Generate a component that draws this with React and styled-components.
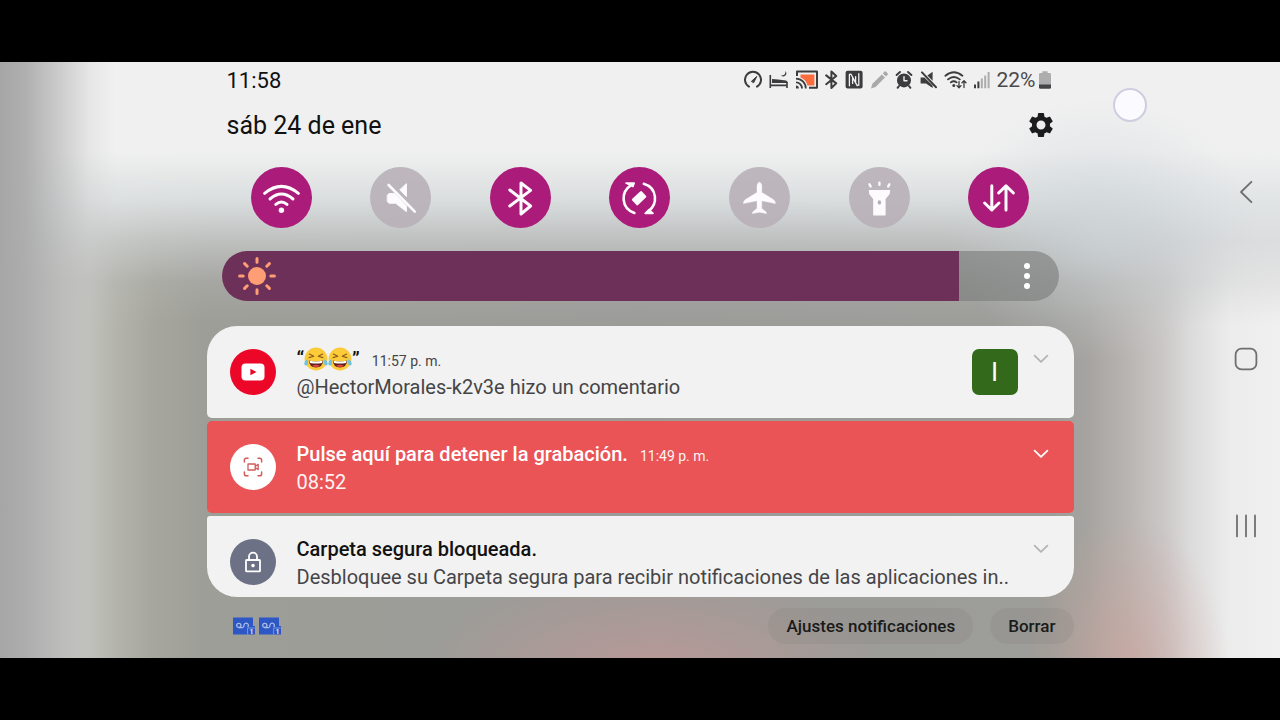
import React, { useState } from 'react'
import styled, { createGlobalStyle } from 'styled-components'
import { MdSettings } from 'react-icons/md'

const GlobalStyle = createGlobalStyle`
* { box-sizing: border-box; }
body {
  margin: 0;
  background: #000;
  font-family: Roboto, "Noto Sans", sans-serif;
}
button {
  font: inherit;
  color: inherit;
  border: 0;
  padding: 0;
  background: none;
  cursor: pointer;
}
svg { display: block; }
h2, p { margin: 0; }
`

const Letterbox = styled.div`
min-height: 100vh;
padding: 62px 0;
display: flex;
background: #000;
`

const Screen = styled.main`
flex: 1;
display: grid;
grid-template-columns: 1fr minmax(0, 867px) 1fr;
background:
  linear-gradient(to right, #a6a6a7 0%, rgba(172, 172, 173, 0.95) 2%, rgba(186, 186, 186, 0.6) 5%, rgba(200, 200, 200, 0.25) 7%, rgba(220, 220, 220, 0) 9%),
  radial-gradient(ellipse 8% 26% at 88% 102%, rgba(206, 160, 152, 0.6), rgba(206, 160, 152, 0)),
  radial-gradient(ellipse 18% 18% at 51% 103%, rgba(196, 152, 150, 0.75), rgba(196, 152, 150, 0)),
  radial-gradient(ellipse 12% 22% at 86% 28%, rgba(206, 214, 218, 0.7), rgba(206, 214, 218, 0)),
  linear-gradient(to bottom, #f1f0f1 0%, #f0f0f0 15%, rgba(224, 228, 229, 0.92) 23%, rgba(208, 211, 212, 0.65) 30%, rgba(188, 190, 190, 0.25) 37%, rgba(180, 180, 180, 0) 44%),
  linear-gradient(to right, #c2c3bd 0%, #c2c3bd 6%, #b4b4ac 9%, #a6a69d 12%, #9e9e98 16%, #9b9b98 50%, #9d9d99 82%, #a6a4a0 85%, #b8b4b1 88%, #cbc8c7 91%, #dcdbdb 93%, #ececec 96%, #f1f0f1 100%);
`

const Panel = styled.section`
grid-column: 2;
display: flex;
flex-direction: column;
`

const StatusBar = styled.div`
display: flex;
justify-content: space-between;
align-items: center;
height: 36px;
padding: 0 23px 0 20px;
font-size: 22px;
color: #111;
`

const StatusIcons = styled.div`
display: flex;
align-items: center;
gap: 7px;
color: #3c3c3e;
`

const Battery = styled.div`
display: flex;
align-items: center;
gap: 3px;
font-size: 21px;
color: #4a4a4c;
`

const DateRow = styled.div`
display: flex;
justify-content: space-between;
align-items: center;
height: 54px;
padding: 0 18px 0 20px;
font-size: 25px;
color: #111;
`

const GearButton = styled.button`
font-size: 30px;
color: #1c1c1e;
`

const Toggles = styled.div`
display: grid;
grid-template-columns: repeat(7, 1fr);
justify-items: center;
padding: 15px 15px 0;
`

const Toggle = styled.button`
width: 61px;
height: 61px;
border-radius: 50%;
color: #fdfbfd;
background: ${({ $on }) => ($on ? '#ab1b79' : 'rgba(184, 176, 183, 0.9)')};
`

const Brightness = styled.div`
display: grid;
grid-template-columns: 16px 38px 1fr 48px 8px;
align-items: center;
height: 50px;
margin: 23px 15px 25px;
`

const Range = styled.input`
grid-area: 1 / 1 / 2 / 6;
appearance: none;
width: 100%;
height: 50px;
margin: 0;
border-radius: 25px;
&::-webkit-slider-thumb {
  appearance: none;
  width: 1px;
  height: 50px;
}
`

const SunSlot = styled.span`
grid-area: 1 / 2;
pointer-events: none;
`

const DotsButton = styled.button`
grid-area: 1 / 4;
height: 50px;
display: flex;
justify-content: center;
align-items: center;
`

const List = styled.div`
display: flex;
flex-direction: column;
gap: 3px;
`

const Card = styled.article`
display: flex;
align-items: flex-start;
padding: 19px 15px 17px 23px;
border-radius: 5px;
color: ${({ $alert }) => ($alert ? '#fdf3f3' : '#454547')};
background: ${({ $alert }) => ($alert ? '#ea5456' : '#f2f2f2')};
&:first-child { border-radius: 30px 30px 5px 5px; }
&:last-child {
  padding-bottom: 6px;
  border-radius: 3px 3px 30px 30px;
}
`

const Round = styled.div`
flex: none;
display: grid;
place-items: center;
width: 46px;
height: 46px;
margin: 4px 21px 0 0;
border-radius: 50%;
background: ${({ $bg }) => $bg};
`

const Content = styled.div`
flex: 1;
min-width: 0;
white-space: nowrap;
font-size: 20px;
line-height: 28px;
`

const TitleLine = styled.div`
display: flex;
align-items: baseline;
gap: 12px;
height: 28px;
`

const Title = styled.h2`
display: flex;
font-size: 20px;
line-height: 28px;
font-weight: 500;
color: ${({ $alert }) => ($alert ? '#fff' : '#111')};
`

const When = styled.time`
font-size: 14px;
`

const Avatar = styled.div`
display: grid;
place-items: center;
width: 46px;
height: 46px;
margin: 4px 5px 0 0;
border-radius: 7px;
font-size: 26px;
color: #fff;
background: #32691a;
`

const Expand = styled.button`
display: grid;
place-items: center;
flex: none;
width: 36px;
height: 28px;
color: ${({ $alert }) => ($alert ? '#fff' : '#b4b4b6')};
`

const Footer = styled.footer`
display: flex;
align-items: center;
gap: 17px;
padding: 11px 0 0 26px;
`

const Pending = styled.div`
display: flex;
gap: 4px;
margin-right: auto;
`

const Chip = styled.button`
height: 36px;
padding: 0 18px;
border-radius: 18px;
font-size: 17px;
font-weight: 500;
color: #1a1a1a;
background: rgba(130, 125, 120, 0.2);
`

const Side = styled.nav`
position: relative;
display: flex;
flex-direction: column;
justify-content: center;
align-items: flex-end;
gap: 143px;
padding: 0 22px 3px 0;
color: #6f6f71;
`

const NavButton = styled.button`
width: 24px;
height: 24px;
`

// finger position shown over the screen
const Touch = styled.span`
position: absolute;
top: 26px;
left: 39px;
width: 34px;
height: 34px;
border-radius: 50%;
border: 2px solid #cfcde0;
background: #fbfaff;
`

const Icon = ({ w, h = w, children, ...rest }) => (
  <svg width={w} height={h} viewBox={`0 0 ${w} ${h}`} fill="none" stroke="currentColor" strokeLinecap="round" strokeLinejoin="round" aria-hidden="true" {...rest}>
    {children}
  </svg>
)

const StatusGlyphs = () => (
  <>
    <Icon w={18} h={20} strokeWidth="2">
      <path d="M5 16.6A8 8 0 1 1 13 16.6" />
      <path d="M7.6 11.2L12.8 6.4L9.8 12.4Z" fill="currentColor" strokeWidth="1" />
    </Icon>
    <Icon w={19} h={20} strokeLinecap="butt">
      <path d="M1.3 5V18M18 12V18M1 15.4H18.6" strokeWidth="1.6" />
      <path d="M3 13V9L9 9.4L17 10.6Q18.6 11 18.6 13Z" fill="currentColor" stroke="none" />
      <path d="M16.4 1Q17 5.6 12 5.6Q14 7.4 16.4 5.6Q18.4 3.4 16.4 1Z" fill="currentColor" stroke="none" />
    </Icon>
    <Icon w={23} h={20} strokeLinecap="butt">
      <path d="M5.5 4.4H19.4V15.4H12.4Q10.6 9.4 5.5 7.6Z" fill="#fb6d3c" stroke="none" />
      <path d="M2 6V1.6H22V17.8H14" strokeWidth="2" />
      <path d="M1 8.6A9.8 9.8 0 0 1 10.8 18.4M1 12.4A6 6 0 0 1 7 18.4" strokeWidth="1.8" />
      <path d="M1 15.6A2.8 2.8 0 0 1 3.8 18.4H1Z" fill="currentColor" stroke="none" />
    </Icon>
    <Icon w={13} h={20} strokeWidth="2">
      <path d="M1.2 5.4L11.2 13.4L6.4 18V1.6L11.2 6L1.2 14.2" />
    </Icon>
    <Icon w={18} h={20}>
      <rect x="0.6" y="0.8" width="17" height="17.6" rx="2" fill="currentColor" stroke="none" />
      <path d="M4.4 15.8V4.4L6 4.2L10.6 12.6V6.6M13.8 3.6V15.2L12.2 15.6L7.6 7.4V13.4" stroke="#f0f0f0" strokeWidth="1.3" />
    </Icon>
    <Icon w={18} h={20} color="#a9a9aa">
      <path d="M1 18.4L2.4 13.8L11.8 4.4L15 7.6L5.6 17Z M12.8 3.4L14.6 1.6Q15.4 1 16.2 1.8L17.6 3.2Q18.2 4 17.6 4.8L16 6.6Z" fill="currentColor" stroke="none" />
    </Icon>
    <Icon w={18} h={20} strokeWidth="2">
      <circle cx="9" cy="10.4" r="7" fill="currentColor" stroke="none" />
      <path d="M1.6 5L5 2M16.4 5L13 2M4 16L2.6 17.8M14 16L15.4 17.8" />
      <path d="M9 6.6V10.8H12" stroke="#f0f0f0" strokeWidth="1.4" />
    </Icon>
    <Icon w={17} h={20}>
      <path d="M0.6 7.4H4.4L12.6 15.6V18L6 13.4H0.6Z M12.6 1.8V10.8L7.4 5.6Z" fill="currentColor" stroke="none" />
      <path d="M2 2.4L16 17.2" strokeWidth="2" />
    </Icon>
    <Icon w={23} h={20} strokeWidth="1.8">
      <path d="M1.4 5.8Q9.8 -1.2 18.4 5.8M4 9.4Q9.8 4.6 15.8 9.4M6.8 12.4Q9.8 10 12.6 12.4" />
      <circle cx="9.8" cy="15.4" r="1.5" fill="currentColor" stroke="none" />
      <path d="M15 11.4V17.4M13 15.6L15 17.8L17 15.6M20 17.6V10.8M18 12.8L20 10.6L22 12.8" strokeWidth="1.3" />
    </Icon>
    <Icon w={16} h={20} strokeWidth="2" strokeLinecap="butt">
      <path d="M1 14.4V18.2M4.4 11.4V18.2" />
      <path d="M7.8 8.4V18.2M11.2 5.4V18.2M14.6 2V18.2" stroke="#acacad" />
    </Icon>
  </>
)

const BatteryIcon = () => (
  <Icon w={12} h={20} stroke="none">
    <path d="M3.4 1.2H8.6V3H10.6Q12 3 12 4.4V15H0V4.4Q0 3 1.4 3H3.4Z" fill="#adadae" />
    <path d="M0 14.6H12V17.4Q12 18.8 10.6 18.8H1.4Q0 18.8 0 17.4Z" fill="#454547" />
  </Icon>
)

const toggles = [
  {
    label: 'Wi-Fi',
    on: true,
    icon: (
      <>
        <path d="M13.6 26.4Q30.4 12.4 47.4 26.4M19 32Q30.4 22 42 32M24.8 37.4Q30.4 32.6 36 37.4" strokeWidth="3" />
        <circle cx="30.4" cy="43.2" r="2.7" fill="currentColor" stroke="none" />
      </>
    )
  },
  {
    label: 'Silencio',
    on: false,
    icon: (
      <>
        <path d="M17.5 28L19 26.6H24.5L36.4 38.8V44.6L25.6 36.2H18.8L17.5 34.6Z M36.4 17V29.6L30 23Z" fill="currentColor" strokeWidth="1" />
        <path d="M18.6 18L44.8 44.6" strokeWidth="2.6" />
      </>
    )
  },
  {
    label: 'Bluetooth',
    on: true,
    icon: <path d="M19.8 23L40.6 39L31 47V16L40.6 23.4L19.8 39" strokeWidth="3" />
  },
  {
    label: 'Rotar automáticamente',
    on: true,
    icon: (
      <>
        <path d="M21.8 18.4C11.6 25 11.8 41 25.4 46M34.8 16.8C48.4 21 49.2 37 39.4 44.2" strokeWidth="2.6" />
        <path d="M17 16H25.2L24 19.6ZM36.2 46.4H44L40 42.6Z" fill="currentColor" strokeWidth="1.6" />
        <path d="M24.2 32.6L32 25.4L36 29.6L28.2 37Z" fill="currentColor" strokeWidth="2.6" />
      </>
    )
  },
  {
    label: 'Modo avión',
    on: false,
    icon: <path d="M30.4 15.2Q32.6 15.6 32.8 19V25.4L44.4 32.6Q46.6 34.2 46.4 36.6L32.8 33.8V41.6L36.6 44.4Q37.6 45.4 37.4 46.6L30.4 45.2L23.4 46.6Q23.2 45.4 24.2 44.4L28 41.6V33.8L14.4 36.6Q14.2 34.2 16.4 32.6L28 25.4V19Q28.2 15.6 30.4 15.2Z" fill="currentColor" strokeWidth="0.4" />
  },
  {
    label: 'Linterna',
    on: false,
    icon: (
      <>
        <path d="M20.4 23.6H40.6L40 26.8L36 31.8V47.8H24.8V31.8L20.8 26.8Z" fill="currentColor" strokeWidth="1.2" />
        <ellipse cx="30.4" cy="35.4" rx="1.7" ry="2.2" fill="#b7afb6" stroke="none" />
        <path d="M20.4 17.2L21.6 19.4M30.4 15.6V17.8M40.4 17.2L39.2 19.4" strokeWidth="2.4" />
      </>
    )
  },
  {
    label: 'Datos móviles',
    on: true,
    icon: <path d="M23.8 18.8V43M16.6 36L23.8 43L31 36M38 43V19M30.6 26L38 18.8L45.4 26" strokeWidth="3" />
  }
]

const Sun = () => (
  <Icon w={38} color="#ff9e74">
    <circle cx="19" cy="19" r="9" fill="currentColor" stroke="none" />
    <path d="M19 1.6V5.2M19 32.8V36.4M1.6 19H5.2M32.8 19H36.4M6.6 6.6L9.2 9.2M28.8 28.8L31.4 31.4M6.6 31.4L9.2 28.8M28.8 9.2L31.4 6.6" strokeWidth="3" />
  </Icon>
)

const Laugh = () => (
  <svg width="24" height="26" viewBox="0 0 24 26" role="img" aria-label="😂">
    <circle cx="12" cy="14" r="11.4" fill="#fccb3a" />
    <path d="M4.8 15.6Q12 17.4 19.2 15.6Q18.8 22.4 12 22.4Q5.2 22.4 4.8 15.6Z" fill="#5b2118" />
    <path d="M5.4 15.8Q12 17.4 18.6 15.8L18 18Q12 19 6 18Z" fill="#fff" />
    <path d="M8 20.8Q12 18.6 16 20.8Q12 23.4 8 20.8Z" fill="#e8424a" />
    <path d="M5.4 9L9.8 11.2L5 12.6M18.6 9L14.2 11.2L19 12.6" fill="none" stroke="#8a5a1c" strokeWidth="1.1" strokeLinecap="round" strokeLinejoin="round" />
    <path d="M3.4 14Q-0.4 16.4 0.4 19.4Q1.8 21.6 3.6 19.4Q4.4 17 3.4 14ZM20.6 14Q24.4 16.4 23.6 19.4Q22.2 21.6 20.4 19.4Q19.6 17 20.6 14Z" fill="#6fc3e0" />
  </svg>
)

const YoutubeIcon = () => (
  <Icon w={24} h={18} stroke="none">
    <rect x="0.5" y="0.5" width="23" height="17" rx="4" fill="#fff" />
    <path d="M9.4 5.8L15.6 9L9.4 12.2Z" fill="#ec0628" />
  </Icon>
)

const RecordIcon = () => (
  <Icon w={20} color="#cf5d5c" strokeWidth="1.5">
    <path d="M1.4 5V3Q1.4 1.2 3.2 1.2H5M15 1.2H16.8Q18.6 1.2 18.6 3V5M18.6 15V17Q18.6 18.8 16.8 18.8H15M5 18.8H3.2Q1.4 18.8 1.4 17V15" />
    <path d="M5 7H12.2V13H5ZM12.4 9.2L15.2 7.4V12.6L12.4 10.8" strokeWidth="1.3" />
  </Icon>
)

const LockIcon = () => (
  <Icon w={18} h={22} color="#fff" strokeWidth="1.8">
    <rect x="2" y="9" width="14" height="11.4" rx="0.6" />
    <path d="M5 9V5.6A4 4 0 0 1 13 5.6V9" />
    <circle cx="9" cy="14.6" r="1.8" fill="currentColor" stroke="none" />
  </Icon>
)

const VoicemailIcon = () => (
  <Icon w={22} h={18}>
    <path d="M0 0.4H20V9H22V17.6H0Z" fill="#2c57c4" stroke="none" />
    <circle cx="5.8" cy="8.4" r="2.1" stroke="#a9bbe6" strokeWidth="1.3" />
    <path d="M5.8 10.6H9.6Q11 10.4 11 8.2A2.2 2.2 0 1 1 15 9.6" stroke="#a9bbe6" strokeWidth="1.3" />
    <path d="M14.6 17V11H21.4" stroke="#8fa6dd" strokeWidth="0.8" />
    <text x="16.4" y="16.8" fontSize="7" fontWeight="700" fill="#dfe6f7" stroke="none">1</text>
  </Icon>
)

const Chevron = () => (
  <Icon w={16} h={10} strokeWidth="1.8">
    <path d="M1.6 1.6L8 7.8L14.4 1.6" />
  </Icon>
)

const notifications = [
  {
    key: 'comment',
    bg: '#ec0628',
    icon: <YoutubeIcon />,
    title: <>“<Laugh /><Laugh />”</>,
    when: '11:57 p. m.',
    text: '@HectorMorales-k2v3e hizo un comentario',
    avatar: 'I'
  },
  {
    key: 'record',
    alert: true,
    bg: '#fff',
    icon: <RecordIcon />,
    title: 'Pulse aquí para detener la grabación.',
    when: '11:49 p. m.',
    text: '08:52'
  },
  {
    key: 'folder',
    bg: '#6c7185',
    icon: <LockIcon />,
    title: 'Carpeta segura bloqueada.',
    text: 'Desbloquee su Carpeta segura para recibir notificaciones de las aplicaciones in..'
  }
]

const Notification = ({ item }) => (
  <Card $alert={item.alert}>
    <Round $bg={item.bg}>{item.icon}</Round>
    <Content>
      <TitleLine>
        <Title $alert={item.alert}>{item.title}</Title>
        {item.when ? <When>{item.when}</When> : null}
      </TitleLine>
      <p>{item.text}</p>
    </Content>
    {item.avatar ? <Avatar>{item.avatar}</Avatar> : null}
    <Expand $alert={item.alert} aria-label="Expandir">
      <Chevron />
    </Expand>
  </Card>
)

const App = () => {
  const [level, setLevel] = useState(88)
  const [active, setActive] = useState(toggles.map((t) => t.on))

  const flip = (index) => {
    setActive(active.map((on, i) => (i === index ? !on : on)))
  }

  return (
    <Letterbox>
      <GlobalStyle />
      <Screen>
        <Panel>
          <StatusBar>
            <time>11:58</time>
            <StatusIcons>
              <StatusGlyphs />
              <Battery>22%<BatteryIcon /></Battery>
            </StatusIcons>
          </StatusBar>
          <DateRow>
            <span>sáb 24 de ene</span>
            <GearButton aria-label="Ajustes"><MdSettings /></GearButton>
          </DateRow>
          <Toggles>
            {toggles.map((t, index) => (
              <Toggle key={t.label} $on={active[index]} aria-label={t.label} aria-pressed={active[index]} onClick={() => flip(index)}>
                <Icon w={61}>{t.icon}</Icon>
              </Toggle>
            ))}
          </Toggles>
          <Brightness>
            <Range
              type="range"
              aria-label="Brillo"
              value={level}
              onChange={(e) => setLevel(Number(e.target.value))}
              style={{ background: `linear-gradient(to right, #6d3058 ${level}%, rgba(125, 127, 126, 0.65) ${level}%)` }}
            />
            <SunSlot><Sun /></SunSlot>
            <DotsButton aria-label="Más opciones">
              <Icon w={8} h={28} color="#fff" stroke="none">
                <circle cx="4" cy="4" r="3" fill="currentColor" />
                <circle cx="4" cy="14" r="3" fill="currentColor" />
                <circle cx="4" cy="24" r="3" fill="currentColor" />
              </Icon>
            </DotsButton>
          </Brightness>
          <List>
            {notifications.map((item) => <Notification key={item.key} item={item} />)}
          </List>
          <Footer>
            <Pending>
              <VoicemailIcon />
              <VoicemailIcon />
            </Pending>
            <Chip>Ajustes notificaciones</Chip>
            <Chip>Borrar</Chip>
          </Footer>
        </Panel>
        <Side>
          <Touch />
          <NavButton aria-label="Atrás">
            <Icon w={24} strokeWidth="1.8"><path d="M17.4 1.8L7 12L17.4 22.2" /></Icon>
          </NavButton>
          <NavButton aria-label="Inicio">
            <Icon w={24} strokeWidth="1.8"><rect x="1.6" y="1.6" width="20.8" height="20.8" rx="6" /></Icon>
          </NavButton>
          <NavButton aria-label="Recientes">
            <Icon w={24} strokeWidth="1.8"><path d="M3 1.4V22.4M12 1.4V22.4M21 1.4V22.4" /></Icon>
          </NavButton>
        </Side>
      </Screen>
    </Letterbox>
  )
}

export default App
